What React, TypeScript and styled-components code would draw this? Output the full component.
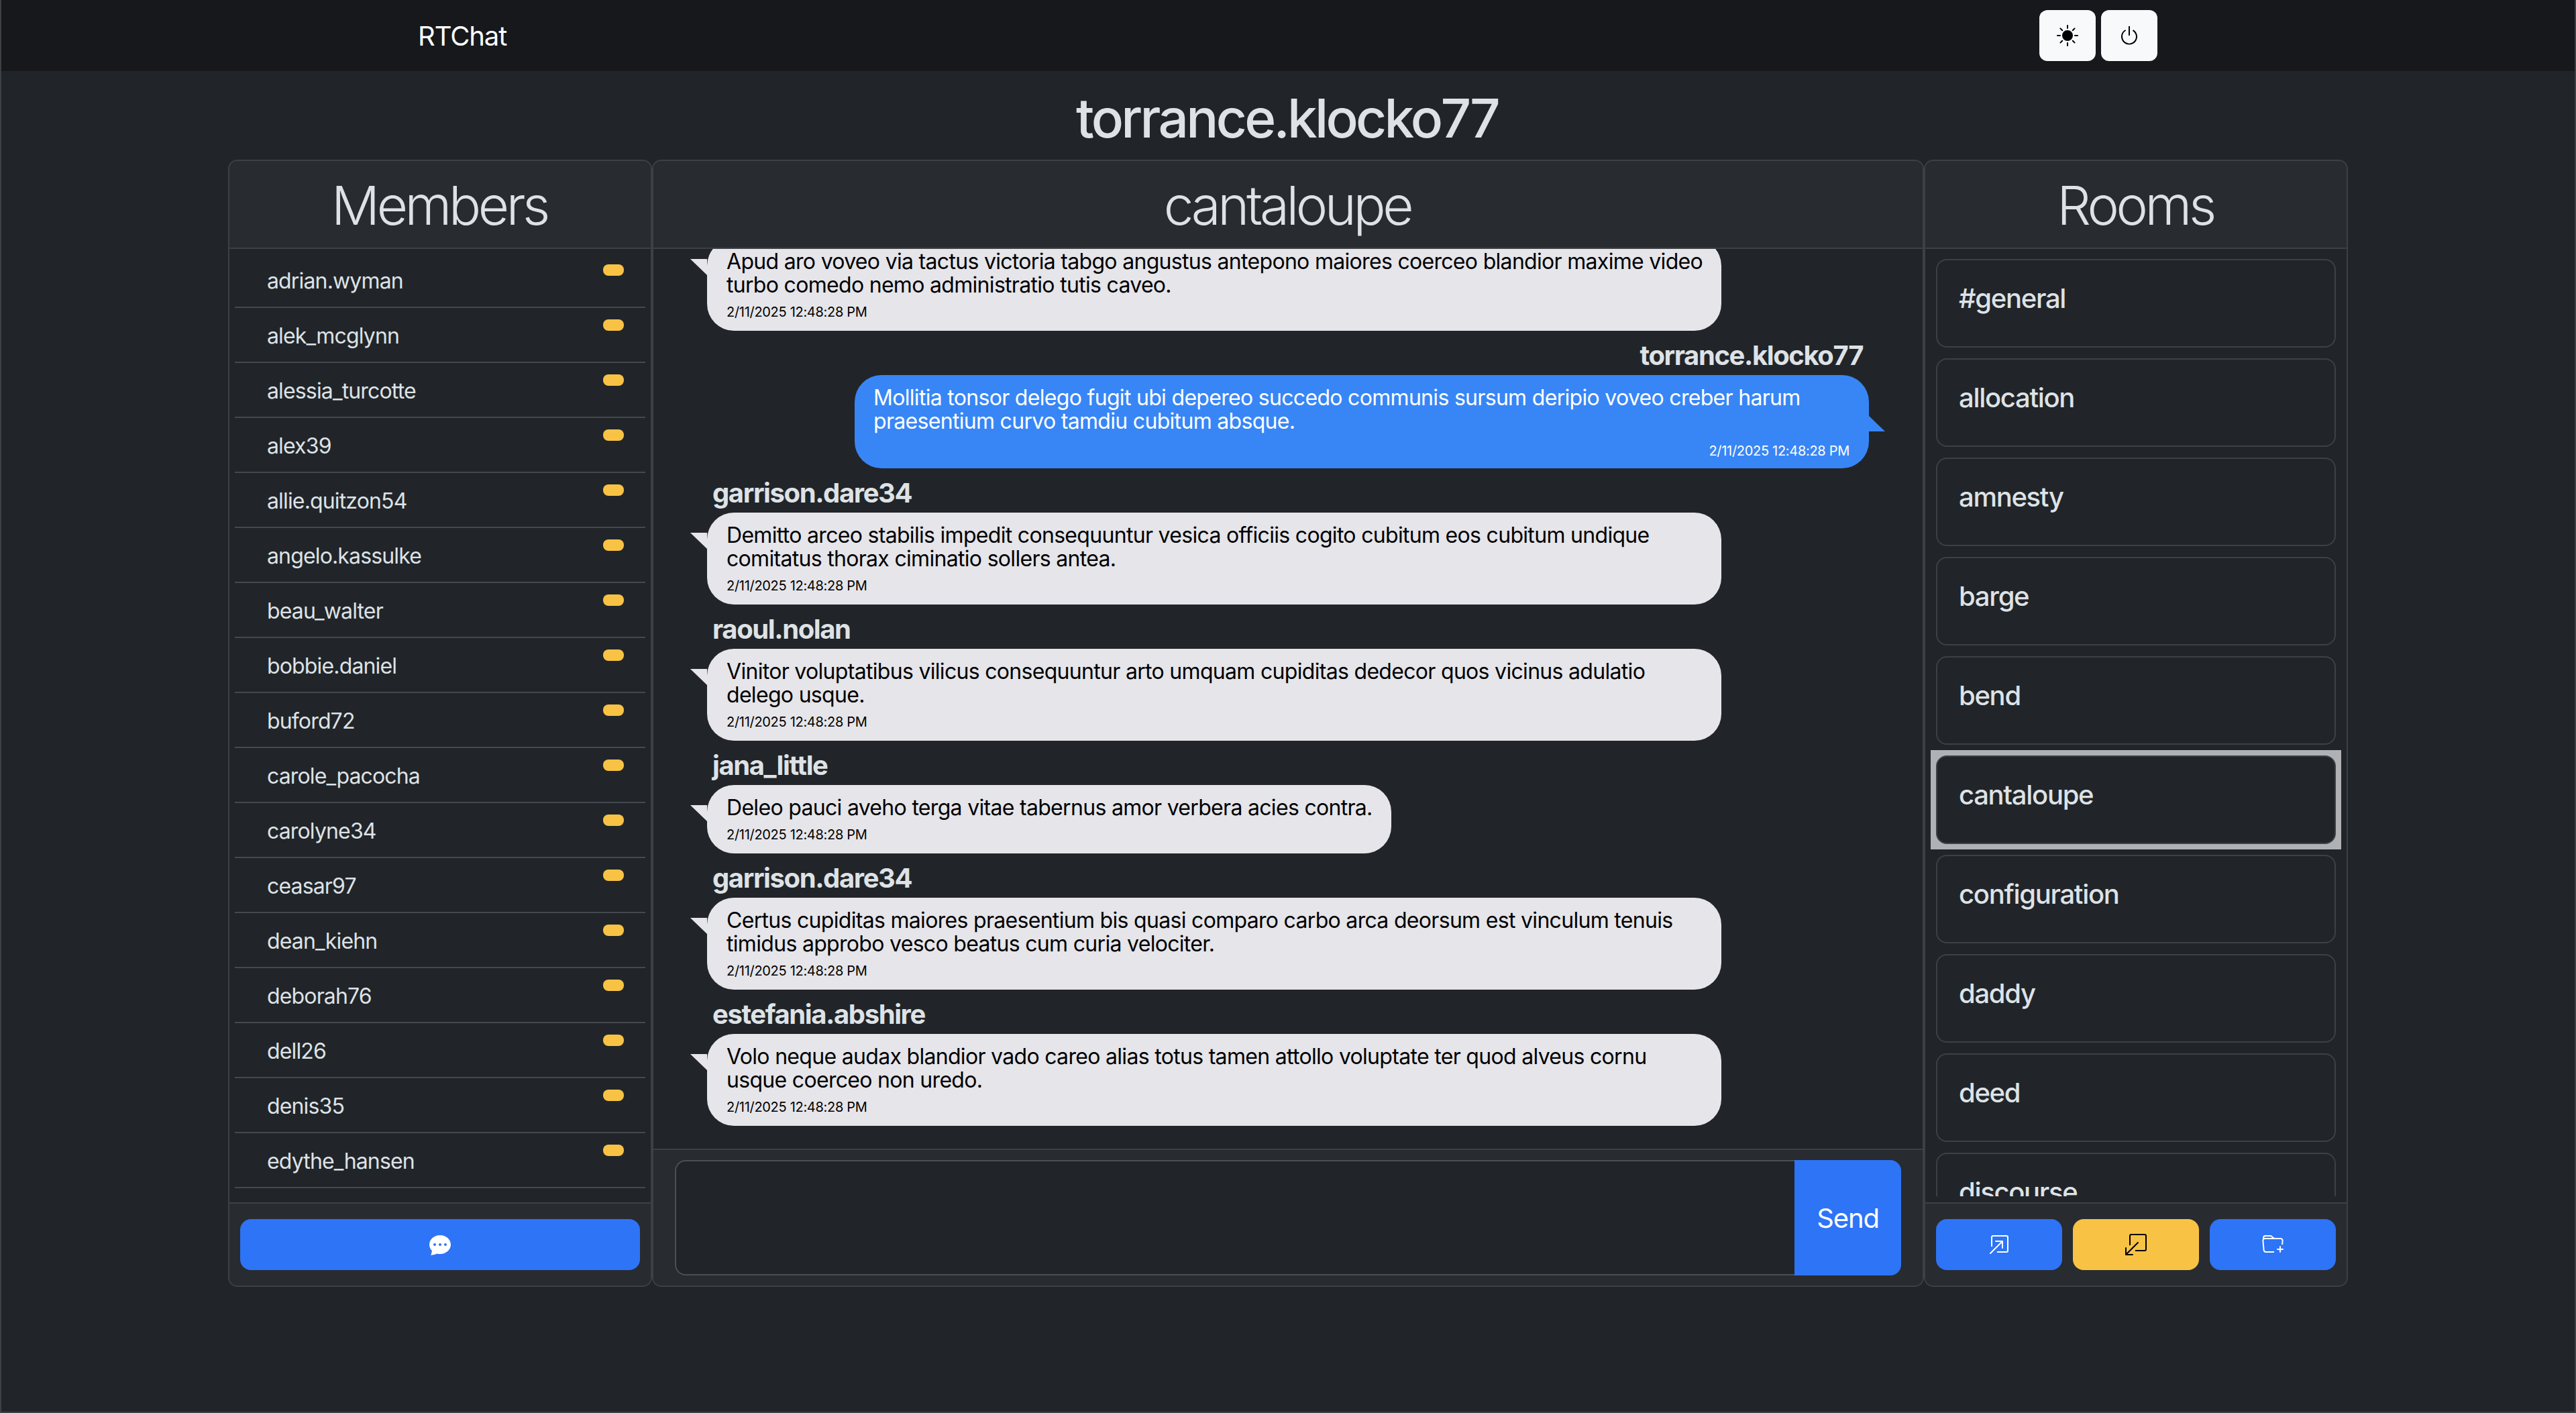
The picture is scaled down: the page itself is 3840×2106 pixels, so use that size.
import React from "react";
import styled, { createGlobalStyle } from "styled-components";
import {
  BsSunFill,
  BsPower,
  BsChatDotsFill,
  BsBoxArrowInUpRight,
  BsBoxArrowDownLeft,
  BsFolderPlus,
} from "react-icons/bs";

const Global = createGlobalStyle`
  html, body { margin: 0; padding: 0; background: #212529; }
  * { box-sizing: border-box; }
  body { font-family: Inter, "Liberation Sans", sans-serif; color: #dee2e6; }
`;

const Page = styled.div`
  height: 2106px;
  overflow: hidden;
  background: #212529;
  border: solid #3d4044;
  border-width: 0 2px 2px;
  display: flex;
  flex-direction: column;
`;

const Navbar = styled.nav`
  height: 106px;
  flex: none;
  background: #16181b;
  display: flex;
  align-items: center;
  padding-left: 621px;
  padding-right: 622px;
`;

const Brand = styled.span`
  font-size: 40px;
  font-weight: 400;
  letter-spacing: -1.1px;
  color: #fff;
  flex: 1;
`;

const NavActions = styled.div`
  display: flex;
  gap: 8px;
`;

const NavButton = styled.button`
  width: 84px;
  height: 76px;
  border: 0;
  border-radius: 12px;
  background: #f8f9fa;
  color: #000;
  display: flex;
  align-items: center;
  justify-content: center;
  padding: 0;
`;

const Title = styled.h1`
  margin: 0;
  height: 132px;
  flex: none;
  display: flex;
  align-items: center;
  justify-content: center;
  padding: 6px 3px 0 0;
  font-size: 80px;
  font-weight: 500;
  letter-spacing: -3.7px;
  color: #dee2e6;
`;

const Board = styled.main`
  width: 3160px;
  height: 1680px;
  margin-left: 338px;
  flex: none;
  display: grid;
  grid-template-columns: 632px 1896px 632px;
`;

const Card = styled.section`
  border: 2px solid #3d4044;
  border-radius: 14px;
  display: flex;
  flex-direction: column;
  min-height: 0;
  overflow: hidden;
`;

const CardHeader = styled.header`
  height: 131px;
  flex: none;
  background: #282b30;
  border-bottom: 2px solid #3d4044;
  display: flex;
  align-items: center;
  justify-content: center;
  padding: 1px 2px 0 0;
  font-size: 80px;
  font-weight: 300;
  letter-spacing: -4.4px;
  color: #dee2e6;
`;

const CardFooter = styled.footer`
  flex: none;
  background: #282b30;
  border-top: 2px solid #3d4044;
`;

const SideFooter = styled(CardFooter)`
  height: 124px;
  padding: 23px 16px;
  display: flex;
  gap: 16px;
`;

const ChatFooter = styled(CardFooter)`
  height: 204px;
  padding: 15px 32px;
  display: flex;
`;

const ActionButton = styled.button<{ $warn?: boolean }>`
  flex: 1;
  height: 76px;
  border: 0;
  border-radius: 16px;
  padding: 0;
  display: flex;
  align-items: center;
  justify-content: center;
  background: ${(p) => (p.$warn ? "#f8c344" : "#2d74f6")};
  color: ${(p) => (p.$warn ? "#000" : "#fff")};
`;

const MemberList = styled.ul`
  flex: 1;
  min-height: 0;
  overflow: hidden;
  margin: 0;
  padding: 6px 8px 0;
  list-style: none;
`;

const MemberRow = styled.li`
  height: 82px;
  padding: 18px 32px 14px 48px;
  border-bottom: 2px solid #44494f;
  display: flex;
  justify-content: space-between;
  align-items: flex-start;
  font-size: 32px;
  line-height: 48px;
  letter-spacing: -0.85px;
  color: #dee2e6;
`;

const Badge = styled.span`
  width: 31px;
  height: 17px;
  margin-top: -1px;
  border-radius: 8px;
  background: #f8c344;
`;

const RoomPane = styled.div`
  flex: 1;
  min-height: 0;
  display: flex;
  padding: 15px 8px 9px;
`;

const RoomScroller = styled.div`
  flex: 1;
  overflow: hidden;
  padding: 0 8px;
`;

const RoomFrame = styled.div<{ $selected?: boolean }>`
  margin: ${(p) => (p.$selected ? "-8px -8px 8px" : "0 0 16px")};
  padding: ${(p) => (p.$selected ? "8px" : "0")};
  background: ${(p) => (p.$selected ? "#b0b1b5" : "transparent")};
`;

const Room = styled.div`
  height: 132px;
  padding: 33px 32px 31px;
  background: #212529;
  border: 2px solid #3d4044;
  border-radius: 16px;
  font-size: 40px;
  line-height: 48px;
  font-weight: 500;
  letter-spacing: -1.3px;
  color: #dee2e6;
`;

const ChatPane = styled.div`
  flex: 1;
  min-height: 0;
  overflow: hidden;
  display: flex;
  flex-direction: column;
  justify-content: flex-end;
  padding: 0 80px 34px 80px;
`;

const Message = styled.article<{ $mine?: boolean }>`
  display: flex;
  flex-direction: column;
  flex: none;
  align-items: ${(p) => (p.$mine ? "flex-end" : "flex-start")};
  margin-top: 16px;
`;

const Sender = styled.div<{ $mine?: boolean }>`
  font-size: 40px;
  line-height: 42px;
  font-weight: 700;
  letter-spacing: -1.4px;
  color: #dee2e6;
  margin: ${(p) => (p.$mine ? "0 9px 8px 0" : "0 0 8px 8px")};
`;

const Bubble = styled.div<{ $mine?: boolean; $wide?: boolean }>`
  position: relative;
  width: ${(p) => (p.$wide ? "1512px" : "fit-content")};
  padding: ${(p) => (p.$mine ? "16px 29px 13px 28px" : "16px 28px 15px 29px")};
  border-radius: 40px;
  background: ${(p) => (p.$mine ? "#3886f6" : "#e5e5ea")};
  color: ${(p) => (p.$mine ? "#fff" : "#000")};
  font-size: 32px;
  line-height: 35px;
  letter-spacing: -0.69px;
  white-space: pre;
  &::before {
    content: "";
    position: absolute;
    top: ${(p) => (p.$mine ? "60px" : "30px")};
    ${(p) => (p.$mine ? "right: -24px;" : "left: -25px;")}
    width: 25px;
    height: 24px;
    background: inherit;
    clip-path: ${(p) =>
      p.$mine ? "polygon(0 0, 100% 100%, 0 100%)" : "polygon(0 0, 100% 0, 100% 100%)"};
  }
`;

const Stamp = styled.div<{ $mine?: boolean }>`
  font-size: 20px;
  line-height: 26px;
  letter-spacing: -0.3px;
  margin-top: ${(p) => (p.$mine ? "14px" : "10px")};
  text-align: ${(p) => (p.$mine ? "right" : "left")};
`;

const ComposeBox = styled.textarea`
  flex: 1;
  height: 172px;
  resize: none;
  background: #212529;
  border: 2px solid #495057;
  border-right: 0;
  border-radius: 16px 0 0 16px;
  outline: none;
`;

const SendButton = styled.button`
  width: 159px;
  height: 172px;
  border: 0;
  border-radius: 0 16px 16px 0;
  background: #2d74f6;
  color: #fff;
  font-family: inherit;
  font-size: 40px;
  font-weight: 400;
  letter-spacing: -1.1px;
`;

const members = [
  "adrian.wyman", "alek_mcglynn", "alessia_turcotte", "alex39", "allie.quitzon54", "angelo.kassulke",
  "beau_walter", "bobbie.daniel", "buford72", "carole_pacocha", "carolyne34", "ceasar97",
  "dean_kiehn", "deborah76", "dell26", "denis35", "edythe_hansen",
];

const rooms = [
  "#general", "allocation", "amnesty", "barge", "bend", "cantaloupe", "configuration", "daddy", "deed", "discourse",
];

const stamp = "2/11/2025 12:48:28 PM";

const messages: { sender?: string; mine?: boolean; text: string }[] = [
  {
    text: "Apud aro voveo via tactus victoria tabgo angustus antepono maiores coerceo blandior maxime video\nturbo comedo nemo administratio tutis caveo.",
  },
  {
    sender: "torrance.klocko77",
    mine: true,
    text: "Mollitia tonsor delego fugit ubi depereo succedo communis sursum deripio voveo creber harum\npraesentium curvo tamdiu cubitum absque.",
  },
  {
    sender: "garrison.dare34",
    text: "Demitto arceo stabilis impedit consequuntur vesica officiis cogito cubitum eos cubitum undique\ncomitatus thorax ciminatio sollers antea.",
  },
  {
    sender: "raoul.nolan",
    text: "Vinitor voluptatibus vilicus consequuntur arto umquam cupiditas dedecor quos vicinus adulatio\ndelego usque.",
  },
  {
    sender: "jana_little",
    text: "Deleo pauci aveho terga vitae tabernus amor verbera acies contra.",
  },
  {
    sender: "garrison.dare34",
    text: "Certus cupiditas maiores praesentium bis quasi comparo carbo arca deorsum est vinculum tenuis\ntimidus approbo vesco beatus cum curia velociter.",
  },
  {
    sender: "estefania.abshire",
    text: "Volo neque audax blandior vado careo alias totus tamen attollo voluptate ter quod alveus cornu\nusque coerceo non uredo.",
  },
];

export default function App() {
  return (
    <>
      <Global />
      <Page>
        <Navbar>
          <Brand>RTChat</Brand>
          <NavActions>
            <NavButton aria-label="theme"><BsSunFill size={32} /></NavButton>
            <NavButton aria-label="log out"><BsPower size={32} /></NavButton>
          </NavActions>
        </Navbar>
        <Title>torrance.klocko77</Title>
        <Board>
          <Card>
            <CardHeader>Members</CardHeader>
            <MemberList>
              {members.map((m) => (
                <MemberRow key={m}>
                  {m}
                  <Badge />
                </MemberRow>
              ))}
            </MemberList>
            <SideFooter>
              <ActionButton aria-label="chat"><BsChatDotsFill size={32} /></ActionButton>
            </SideFooter>
          </Card>
          <Card>
            <CardHeader>cantaloupe</CardHeader>
            <ChatPane>
              {messages.map((m, i) => (
                <Message key={i} $mine={m.mine}>
                  {m.sender && <Sender $mine={m.mine}>{m.sender}</Sender>}
                  <Bubble $mine={m.mine} $wide={m.text.includes("\n")}>
                    {m.text}
                    <Stamp $mine={m.mine}>{stamp}</Stamp>
                  </Bubble>
                </Message>
              ))}
            </ChatPane>
            <ChatFooter>
              <ComposeBox />
              <SendButton>Send</SendButton>
            </ChatFooter>
          </Card>
          <Card>
            <CardHeader>Rooms</CardHeader>
            <RoomPane>
              <RoomScroller>
                {rooms.map((r) => (
                  <RoomFrame key={r} $selected={r === "cantaloupe"}>
                    <Room>{r}</Room>
                  </RoomFrame>
                ))}
              </RoomScroller>
            </RoomPane>
            <SideFooter>
              <ActionButton aria-label="join"><BsBoxArrowInUpRight size={32} /></ActionButton>
              <ActionButton $warn aria-label="leave"><BsBoxArrowDownLeft size={32} /></ActionButton>
              <ActionButton aria-label="new room"><BsFolderPlus size={32} /></ActionButton>
            </SideFooter>
          </Card>
        </Board>
      </Page>
    </>
  );
}
